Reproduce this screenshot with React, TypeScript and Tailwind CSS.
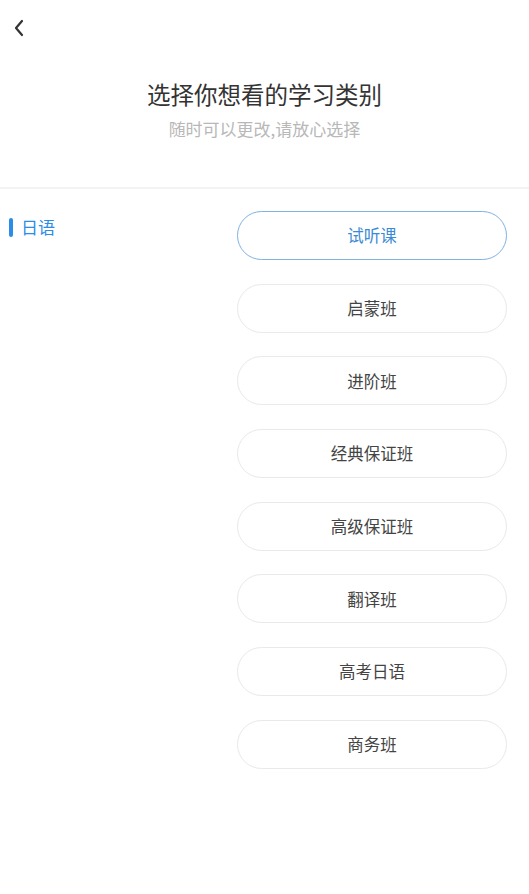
import React from "react";

const classes = ["试听课", "启蒙班", "进阶班", "经典保证班", "高级保证班", "翻译班", "高考日语", "商务班"];

export default function App() {
  const font = { fontFamily: '"Noto Sans CJK SC", "Noto Sans", sans-serif' };
  return (
    <div className="w-[529px] h-[894px] bg-white overflow-hidden" style={font}>
      {/* top bar */}
      <div className="h-[56px] flex items-start pl-[13px] pt-[19px]">
        <svg width="12" height="18" viewBox="0 0 12 18" fill="none">
          <path d="M9 2 L3 9 L9 16" stroke="#333" strokeWidth="2.2" strokeLinecap="round" strokeLinejoin="round" />
        </svg>
      </div>

      {/* heading */}
      <div className="flex flex-col items-center">
        <div className="mt-[22px] h-[32px] leading-[32px] text-[23.5px] text-[#333]">选择你想看的学习类别</div>
        <div className="mt-[7px] h-[24px] leading-[24px] text-[17px] text-[#b8b8b8]">随时可以更改,请放心选择</div>
      </div>

      <div className="mt-[46px] h-[2px] bg-[#f3f3f3]" />

      {/* body */}
      <div className="flex">
        <div className="flex-1 pt-[26px]">
          <div className="flex items-center h-[24px] pl-[9px]">
            <div className="w-[4px] h-[19px] rounded-full bg-[#2b8de8]" />
            <span className="ml-[8px] text-[17px] leading-[24px] text-[#2b8de8]">日语</span>
          </div>
        </div>
        <div className="w-[270px] mr-[22px] pt-[22px] flex flex-col gap-[23.7px]">
          {classes.map((c, i) => (
            <div
              key={c}
              className={
                i === 0
                  ? "h-[49px] rounded-full border-[1.5px] border-[#80b2e2] flex items-center justify-center text-[16.5px] text-[#3a8ad6]"
                  : "h-[49px] rounded-full border border-[#e9e9e9] flex items-center justify-center text-[16.5px] text-[#444]"
              }
            >
              {c}
            </div>
          ))}
        </div>
      </div>
    </div>
  );
}
